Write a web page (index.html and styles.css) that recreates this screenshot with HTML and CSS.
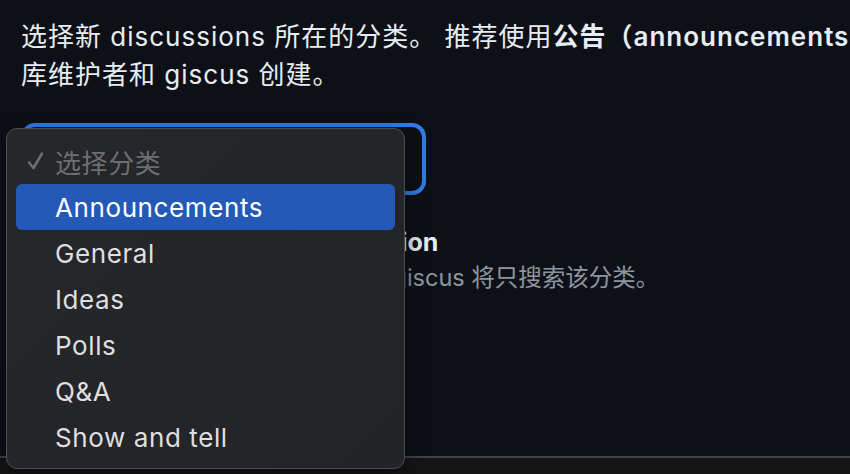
FILE: index.html
```html
<!DOCTYPE html>
<html lang="zh-CN">
<head>
<meta charset="utf-8">
<title>giscus 分类</title>
<link rel="stylesheet" href="styles.css">
</head>
<body>
<div class="page">
  <div class="section">
    <p class="desc"><span class="line">选择新 discussions 所在的分类。 推荐使用<strong>公告（announcements）</strong>类型的分类，以确保新 discussions 只能由仓</span><br>库维护者和 giscus 创建。</p>
    <div class="select"><span class="select-text">选择分类</span></div>
    <div class="option">
      <div class="option-title">只在该分类中搜索匹配的 discussion</div>
      <div class="option-desc">当搜索匹配的 discussion 时，giscus 将只搜索该分类。</div>
    </div>
  </div>
  <div class="next-section"></div>
  <div class="menu">
    <div class="menu-item header"><svg class="check" width="17" height="20" viewBox="0 0 17 20"><path d="M2 11.5 L6.5 17 L15 2.5" fill="none" stroke="#6c6e72" stroke-width="2.6" stroke-linecap="round" stroke-linejoin="round"/></svg>选择分类</div>
    <div class="menu-item active">Announcements</div>
    <div class="menu-item">General</div>
    <div class="menu-item">Ideas</div>
    <div class="menu-item">Polls</div>
    <div class="menu-item">Q&amp;A</div>
    <div class="menu-item">Show and tell</div>
  </div>
</div>
</body>
</html>
```
FILE: styles.css
```css
html, body {
  margin: 0;
  padding: 0;
  background: #0d1117;
  overflow: hidden;
}
body {
  width: 850px;
  height: 474px;
  font-family: "Inter", "Noto Sans CJK SC", sans-serif;
  color: #e6edf3;
}
.page {
  position: relative;
  width: 850px;
  height: 474px;
  overflow: hidden;
  display: flex;
  flex-direction: column;
}
.section {
  height: 456px;
  padding: 18px 0 0 21px;
  box-sizing: border-box;
}
.desc {
  margin: 0;
  font-size: 26px;
  letter-spacing: 1px;
  line-height: 38px;
  white-space: nowrap;
}
.desc strong {
  font-weight: 600;
}
.select {
  margin-top: 29px;
  width: 405px;
  height: 72px;
  box-sizing: border-box;
  border: 4px solid #2f7ee9;
  border-radius: 14px;
  padding-left: 20px;
  display: flex;
  align-items: center;
  font-size: 25px;
  color: #e6edf3;
}
.option {
  margin-top: 32px;
  display: flex;
  flex-direction: column;
  gap: 6px;
}
.option-title {
  font-size: 25px;
  font-weight: 700;
  line-height: 30px;
  padding-left: 4px;
}
.option-desc {
  font-size: 23.5px;
  color: #8d96a0;
  line-height: 30px;
  padding-left: 52px;
  white-space: nowrap;
}
.next-section {
  flex: 1;
  border-top: 2px solid #3f444b;
  background: #151515;
}
.menu {
  position: absolute;
  left: 6px;
  top: 128px;
  width: 399px;
  height: 341px;
  box-sizing: border-box;
  padding: 9px 9px;
  background: linear-gradient(135deg, #25272a, #222427);
  border: 1px solid #4a4d52;
  border-radius: 11px;
  box-shadow: 0 8px 24px rgba(0, 0, 0, 0.5);
  display: flex;
  flex-direction: column;
}
.menu-item {
  height: 46px;
  flex: none;
  display: flex;
  align-items: center;
  padding-left: 39px;
  border-radius: 6px;
  font-family: "Inter", "Noto Sans CJK SC", sans-serif;
  font-size: 26px;
  letter-spacing: 0.6px;
  color: #dfdfe0;
  position: relative;
}
.menu-item.header {
  color: #6c6e72;
}
.check {
  position: absolute;
  left: 11px;
  top: 13px;
}
.menu-item.active {
  background: #2459b8;
  color: #ffffff;
}
```
